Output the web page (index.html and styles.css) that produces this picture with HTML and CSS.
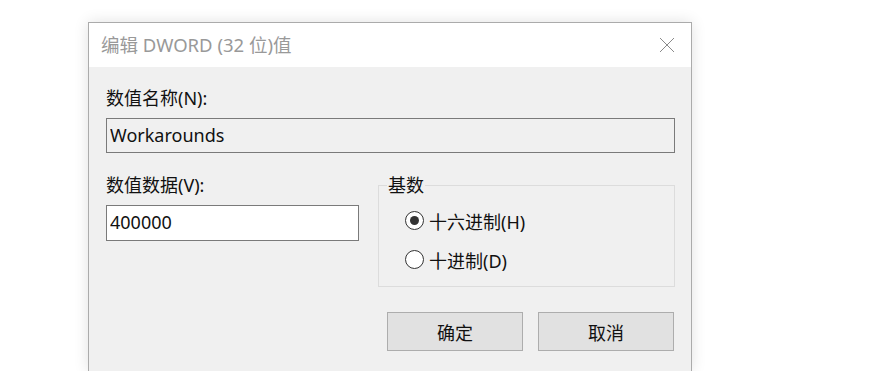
FILE: index.html
```html
<!DOCTYPE html>
<html lang="zh-CN">
<head>
    <meta charset="UTF-8">
    <title>编辑 DWORD (32 位)值</title>
    <link rel="stylesheet" href="styles.css">
</head>
<body>
    <div class="dialog">
        <div class="titlebar">
            <span class="title">编辑 DWORD (32 位)值</span>
            <button class="close-btn" type="button" aria-label="关闭">
                <svg width="16" height="16" viewBox="0 0 16 16">
                    <path d="M1 1 L15 15 M15 1 L1 15" stroke="#8a8a8a" stroke-width="1" fill="none"/>
                </svg>
            </button>
        </div>

        <div class="content">
            <label class="field-label" for="valueName">数值名称(N):</label>
            <input class="text-box readonly" id="valueName" type="text" value="Workarounds" readonly>

            <div class="row">
                <div class="data-col">
                    <label class="field-label" for="valueData">数值数据(V):</label>
                    <input class="text-box" id="valueData" type="text" value="400000">
                </div>

                <fieldset class="base-group">
                    <legend>基数</legend>
                    <label class="radio-row">
                        <input type="radio" name="base" checked>
                        <span>十六进制(H)</span>
                    </label>
                    <label class="radio-row">
                        <input type="radio" name="base">
                        <span>十进制(D)</span>
                    </label>
                </fieldset>
            </div>

            <div class="buttons">
                <button class="dlg-btn" type="button">确定</button>
                <button class="dlg-btn" type="button">取消</button>
            </div>
        </div>
    </div>
</body>
</html>
```

FILE: styles.css
```css
* {
    margin: 0;
    padding: 0;
    box-sizing: border-box;
}

html, body {
    height: 100%;
    overflow: hidden;
}

body {
    background: #ffffff;
    font-family: "Noto Sans", "Noto Sans CJK SC", sans-serif;
    font-size: 18px;
    color: #111111;
    padding: 22px 0 0 88px;
}

.dialog {
    width: 604px;
    height: 349px;
    border: 1px solid #ababab;
    border-bottom: none;
    background: #f0f0f0;
    box-shadow: 0 0 14px rgba(0, 0, 0, 0.12);
}

.titlebar {
    height: 44px;
    background: #ffffff;
    display: flex;
    align-items: center;
    justify-content: space-between;
    padding: 0 16px 0 12px;
}

.title {
    color: #999999;
    font-size: 18.5px;
    line-height: 22px;
}

.close-btn {
    border: none;
    background: none;
    width: 16px;
    height: 16px;
    display: flex;
}

.content {
    padding: 20px 16px 0 17px;
}

.field-label {
    display: block;
    line-height: 22px;
    margin-bottom: 9px;
}

.text-box {
    display: block;
    width: 100%;
    height: 35px;
    border: 1px solid #7a7a7a;
    background: #ffffff;
    font: inherit;
    color: #111111;
    padding: 0 3px 2px;
    outline: none;
}

.text-box.readonly {
    background: #f0f0f0;
}

.row {
    display: flex;
    gap: 19px;
    margin-top: 21px;
}

.data-col {
    width: 253px;
}

.data-col .text-box {
    height: 36px;
}

.base-group {
    flex: 1;
    height: 113px;
    border: 1px solid #dcdcdc;
    padding: 5px 8px 0 8px;
}

.base-group legend {
    line-height: 22px;
    padding: 0 1px;
}

.radio-row {
    display: flex;
    align-items: center;
    gap: 5px;
    height: 39px;
    margin-left: 18px;
}

.radio-row input {
    appearance: none;
    width: 19px;
    height: 19px;
    border: 1px solid #333333;
    border-radius: 50%;
    background: #ffffff;
    display: grid;
    place-items: center;
}

.radio-row input:checked::after {
    content: "";
    width: 9px;
    height: 9px;
    border-radius: 50%;
    background: #333333;
}

.buttons {
    display: flex;
    justify-content: flex-end;
    gap: 15px;
    margin-top: 25px;
    padding-right: 1px;
}

.dlg-btn {
    width: 136px;
    height: 39px;
    border: 1px solid #adadad;
    background: #e1e1e1;
    font: inherit;
    color: #111111;
}
```
